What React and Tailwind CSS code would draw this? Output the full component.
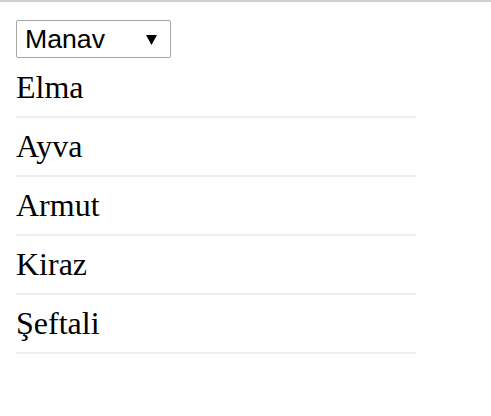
const FRUITS = ['Elma', 'Ayva', 'Armut', 'Kiraz', 'Şeftali']

export default function App() {
  return (
    <div className="min-h-[416px] w-full border-t-2 border-[#cfcfcf] bg-white px-4 pt-[18px]">
      {/* select-like dropdown */}
      <div className="flex h-[38px] w-[155px] items-center justify-between rounded-[2px] border border-[#a6a6a6] bg-white pl-[8px] pr-[13px] font-['Liberation_Sans',Arial,sans-serif] text-[26.67px] leading-none text-black">
        <span>Manav</span>
        <svg width="11" height="10" viewBox="0 0 11 10" className="mt-[2px]">
          <polygon points="0,0 11,0 5.5,10" fill="#000" />
        </svg>
      </div>

      <ul className="mt-px w-[400px] font-['Liberation_Serif','Times_New_Roman',serif] text-[32px] leading-[37px] text-black">
        {FRUITS.map((f) => (
          <li key={f} className="border-b-2 border-[#eeeeee] py-[10px]">
            {f}
          </li>
        ))}
      </ul>
    </div>
  )
}
